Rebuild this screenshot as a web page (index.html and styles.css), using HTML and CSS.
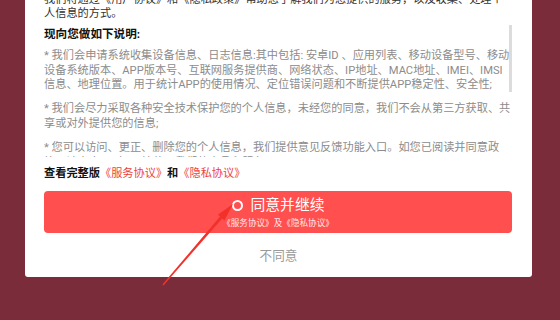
FILE: index.html
```html
<!DOCTYPE html>
<html lang="zh-CN">
<head>
<meta charset="utf-8">
<title>隐私政策</title>
<link rel="stylesheet" href="styles.css">
</head>
<body>
<div class="stage">
  <div class="card">
    <div class="scroll">
      <div class="scroll-content">
        <p class="intro">我们将通过《用户协议》和《隐私政策》帮助您了解我们为您提供的服务，以及收集、处理个人信息的方式。</p>
        <h3 class="heading">现向您做如下说明:</h3>
        <p class="item">* 我们会申请系统收集设备信息、日志信息:其中包括: 安卓ID 、应用列表、移动设备型号、移动设备系统版本、APP版本号、互联网服务提供商、网络状态、IP地址、MAC地址、IMEI、IMSI信息、地理位置。用于统计APP的使用情况、定位错误问题和不断提供APP稳定性、安全性;</p>
        <p class="item">* 我们会尽力采取各种安全技术保护您的个人信息，未经您的同意，我们不会从第三方获取、共享或对外提供您的信息;</p>
        <p class="item">* 您可以访问、更正、删除您的个人信息，我们提供意见反馈功能入口。如您已阅读并同意政策，请点击“同意”开始使用我们的产品和服务。</p>
      </div>
      <div class="scroll-thumb"></div>
    </div>
    <div class="links">查看完整版<span class="link">《服务协议》</span>和<span class="link">《隐私协议》</span></div>
    <button class="agree" type="button">
      <span class="agree-title"><span class="radio"></span>同意并继续</span>
      <span class="agree-sub">《服务协议》及《隐私协议》</span>
    </button>
    <div class="decline">不同意</div>
  </div>
  <svg class="arrow" width="560" height="320" viewBox="0 0 560 320" aria-hidden="true">
    <polygon points="163.5,285.4 222.2,218.6 224.4,220.4 233,204 217.8,214.8 220.0,216.6 162.4,284.6" fill="#f2322a"/>
  </svg>
</div>
</body>
</html>
```
FILE: styles.css
```css
html, body {
  margin: 0;
  padding: 0;
}
body {
  background: #7a2c3b;
  font-family: Roboto, "Noto Sans CJK SC", sans-serif;
  overflow: hidden;
}
.stage {
  position: relative;
  width: 560px;
  height: 320px;
  overflow: hidden;
}
.card {
  margin: 0 28px 0 25px;
  background: #fff;
  border-radius: 0 0 3px 3px;
  padding: 0 19px 12px 19px;
}
.scroll {
  position: relative;
  height: 157px;
  overflow: hidden;
}
.scroll-content {
  margin-top: -7px;
  font-size: 11.2px;
  line-height: 14.4px;
}
.intro {
  margin: 0;
  color: #333;
}
.heading {
  margin: 5px 0 0;
  font-size: 11.6px;
  line-height: 14.4px;
  font-weight: 700;
  color: #111;
}
.item {
  margin: 8px 0 0;
  color: #8c8c8c;
}
.item + .item {
  margin-top: 10px;
}
.scroll-thumb {
  position: absolute;
  right: 1px;
  top: 25px;
  width: 3px;
  height: 67px;
  background: #dcdcdc;
}
.links {
  margin-top: 9px;
  font-size: 11.2px;
  line-height: 16px;
  font-weight: 700;
  color: #111;
}
.link {
  font-weight: 400;
  color: #ee3f3c;
}
.agree {
  display: flex;
  flex-direction: column;
  align-items: center;
  width: calc(100% - 1px);
  height: 42px;
  margin-top: 9px;
  padding: 5px 0 0;
  border: none;
  border-radius: 4px;
  background: #ff4f4f;
  color: #fff;
  font-family: inherit;
}
.agree-title {
  display: flex;
  align-items: center;
  gap: 8px;
  font-size: 14.8px;
  line-height: 18px;
}
.radio {
  width: 7px;
  height: 7px;
  border: 2px solid #fff;
  border-radius: 50%;
}
.agree-sub {
  margin-top: 4px;
  font-size: 8.6px;
  line-height: 11px;
  color: rgba(255, 255, 255, 0.88);
}
.decline {
  margin-top: 14px;
  text-align: center;
  font-size: 12.6px;
  line-height: 18px;
  color: #9a9a9a;
}
.arrow {
  position: absolute;
  left: 0;
  top: 0;
  pointer-events: none;
}
```
